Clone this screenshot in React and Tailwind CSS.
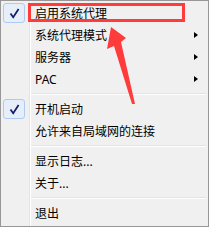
const items = [
  { label: "启用系统代理", checked: true },
  { label: "系统代理模式", sub: true },
  { label: "服务器", sub: true },
  { label: "PAC", sub: true },
  { sep: true },
  { label: "开机启动", checked: true },
  { label: "允许来自局域网的连接" },
  { sep: true },
  { label: "显示日志..." },
  { label: "关于..." },
  { sep: true },
  { label: "退出" },
];

const Check = () => (
  <div className="ml-[2px] w-[22px] h-[20px] rounded-[3px] border border-[#aecbef] bg-[#e6eefa] flex items-center justify-center">
    <svg width="11" height="11" viewBox="0 0 11 11">
      <path d="M1.5 5.5 L4.2 9.2 L9.6 1" fill="none" stroke="#0c1d6b" strokeWidth="1.7" />
    </svg>
  </div>
);

export default function App() {
  return (
    <div className="w-[210px] h-[228px] bg-white">
      <div
        className="relative w-[209px] h-[227px] border border-[#979797] pt-[1px] bg-[linear-gradient(to_right,#f0f0f0_28px,#e2e3e3_28px,#e2e3e3_29px,#ffffff_29px,#ffffff_30px,#f0f0f0_30px)] text-[12px] text-black"
        style={{ fontFamily: '"Noto Sans", "Noto Sans CJK SC", sans-serif' }}
      >
        {items.map((item, i) =>
          item.sep ? (
            <div key={i} className="h-[8px] flex items-center pl-[30px] pr-[2px]">
              <div className="w-full border-t border-t-[#e2e3e3] border-b border-b-white" />
            </div>
          ) : (
            <div key={i} className="h-[22px] flex items-center">
              <div className="w-[34px] shrink-0 flex items-center">
                {item.checked && <Check />}
              </div>
              <span className="leading-none pt-[1px]">{item.label}</span>
              {item.sub && (
                <div className="ml-auto mr-[10px] w-0 h-0 border-y-[3.5px] border-y-transparent border-l-[4px] border-l-black" />
              )}
            </div>
          ),
        )}
        <div className="absolute left-[27px] top-[2px] w-[157px] h-[19px] border-[3px] border-[#ff3b3b]" />
        <svg className="absolute left-0 top-0" width="208" height="226" viewBox="1 1 208 226">
          <polygon points="111,27 126,38 121,42 135,104 132,104 114,46 107,49" fill="#ff3b3b" />
        </svg>
      </div>
    </div>
  );
}
